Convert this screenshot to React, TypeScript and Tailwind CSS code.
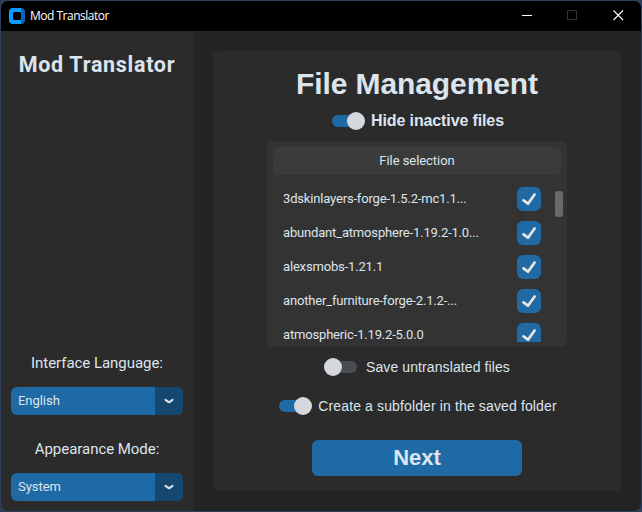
import React from "react";

const files = [
  "3dskinlayers-forge-1.5.2-mc1.1...",
  "abundant_atmosphere-1.19.2-1.0...",
  "alexsmobs-1.21.1",
  "another_furniture-forge-2.1.2-...",
  "atmospheric-1.19.2-5.0.0",
];

function TitleBar() {
  return (
    <header className="flex h-[30px] shrink-0 items-center bg-black pl-2">
      <svg width="16" height="16" viewBox="0 0 16 16">
        <path d="M4 0H12v16H4A4 4 0 0 1 0 12V4A4 4 0 0 1 4 0z" fill="#0a9cff" />
        <path d="M12 0a4 4 0 0 1 4 4v8a4 4 0 0 1-4 4z" fill="#0866b5" />
        <rect x="4" y="4" width="8" height="8" rx="1.500" fill="#000" />
      </svg>
      <span className="ml-[5px] font-['Open_Sans',sans-serif] text-[12px] leading-4 tracking-[-0.5px] text-white">Mod Translator</span>
      <div className="ml-auto flex">
        <svg width="46" height="30" viewBox="0 0 46 30">
          <path d="M17 14.500h10" stroke="#fff" />
        </svg>
        <svg width="46" height="30" viewBox="0 0 46 30">
          <rect x="16.500" y="9.500" width="9" height="9" fill="none" stroke="#333" />
        </svg>
        <svg width="44" height="30" viewBox="0 0 44 30">
          <path d="M16.500 9.500l9.500 9.500M26 9.500L16.500 19" stroke="#fff" strokeWidth="1.100" />
        </svg>
      </div>
    </header>
  );
}

function OptionMenu({ value }: { value: string }) {
  return (
    <button className="flex h-7 w-[172px] overflow-hidden rounded-[6px] bg-[#1f6aa5] text-left">
      <span className="flex-1 pl-[7px] text-[13px] leading-[27px] tracking-[-0.04px]">{value}</span>
      <span className="flex h-7 w-7 items-center justify-center bg-[#144870]">
        <svg width="10" height="6" viewBox="0 0 10 6">
          <path d="M1.500 1.900L5 4.300l3.500-2.400" fill="none" stroke="#dce4ee" strokeWidth="2.100" strokeLinecap="round" strokeLinejoin="round" />
        </svg>
      </span>
    </button>
  );
}

function Toggle({ on }: { on: boolean }) {
  return (
    <span className={`flex h-3 w-[33px] shrink-0 items-center rounded-full ${on ? "justify-end bg-[#1f6aa5]" : "justify-start bg-[#4a4d50]"}`}>
      <span className="h-[18px] w-[18px] shrink-0 rounded-full bg-[#d5d9de]" />
    </span>
  );
}

function FileRow({ name }: { name: string }) {
  return (
    <div className="flex h-6 shrink-0 items-center justify-between">
      <span className="text-[13px] leading-6 tracking-[-0.17px]">{name}</span>
      <span className="h-6 w-6 rounded-[6px] bg-[#1f6aa5]">
        <svg width="24" height="24" viewBox="0 0 24 24">
          <path d="M6.500 13.400L11 16.700l6.600-9.200" fill="none" stroke="#e5e5e5" strokeWidth="2.700" strokeLinecap="round" strokeLinejoin="round" />
        </svg>
      </span>
    </div>
  );
}

export default function App() {
  return (
    <div className="h-[512px] w-[642px] bg-[#2d3d5c] p-px font-[Roboto,sans-serif] text-[#dce4ee]">
      <div className="flex h-[510px] flex-col overflow-hidden rounded-[7px] bg-[#242424]">
        <TitleBar />
        <div className="flex min-h-0 flex-1">
          <aside className="flex w-48 flex-col items-center bg-[#2b2b2b] pb-[10px] pt-5">
            <h1 className="text-[21.5px] font-bold leading-7 tracking-[0.7px]">Mod Translator</h1>
            <div className="mt-auto flex flex-col items-center">
              <span className="mb-[10px] text-[15px] leading-7 tracking-[-0.04px]">Interface Language:</span>
              <OptionMenu value="English" />
              <span className="mb-[10px] mt-5 text-[15px] leading-7 tracking-[-0.04px]">Appearance Mode:</span>
              <OptionMenu value="System" />
            </div>
          </aside>
          <main className="m-5 flex w-[408px] flex-col items-center rounded-[6px] bg-[#2b2b2b] font-['Liberation_Sans',sans-serif]">
            <h2 className="mt-4 text-[30px] font-bold leading-[34px] tracking-[-0.1px]">File Management</h2>
            <label className="ml-[2px] mt-2 flex h-6 items-center gap-[6px] text-[16px] font-bold">
              <Toggle on />
              <span className="leading-6 tracking-[-0.12px]">Hide inactive files</span>
            </label>
            <section className="mt-2 h-[206px] w-[300px] rounded-[6px] bg-[#333] p-[6px] font-[Roboto,sans-serif]">
              <div className="h-7 rounded-[6px] bg-[#3b3b3b] text-center text-[13px] leading-[27px] tracking-[-0.06px]">File selection</div>
              <div className="-mr-[6px] flex h-[167px] overflow-hidden">
                <div className="ml-[10px] mt-3 flex w-[258px] shrink-0 flex-col gap-[10px]">
                  {files.map((name) => (
                    <FileRow key={name} name={name} />
                  ))}
                </div>
                <div className="ml-[14px] mt-4 h-[26px] w-2 shrink-0 rounded-[3px] bg-[#696969]" />
              </div>
            </section>
            <label className="mt-2 flex h-6 items-center gap-[9px] text-[14px]">
              <Toggle on={false} />
              <span className="leading-6 tracking-[0.1px]">Save untranslated files</span>
            </label>
            <label className="ml-[2px] mt-[15px] flex h-6 items-center gap-[6px] text-[14px]">
              <Toggle on />
              <span className="leading-6 tracking-[0.13px]">Create a subfolder in the saved folder</span>
            </label>
            <button className="mt-[22px] h-9 w-[210px] rounded-[6px] bg-[#1f6aa5] text-[22px] font-bold leading-9">Next</button>
          </main>
        </div>
      </div>
    </div>
  );
}
